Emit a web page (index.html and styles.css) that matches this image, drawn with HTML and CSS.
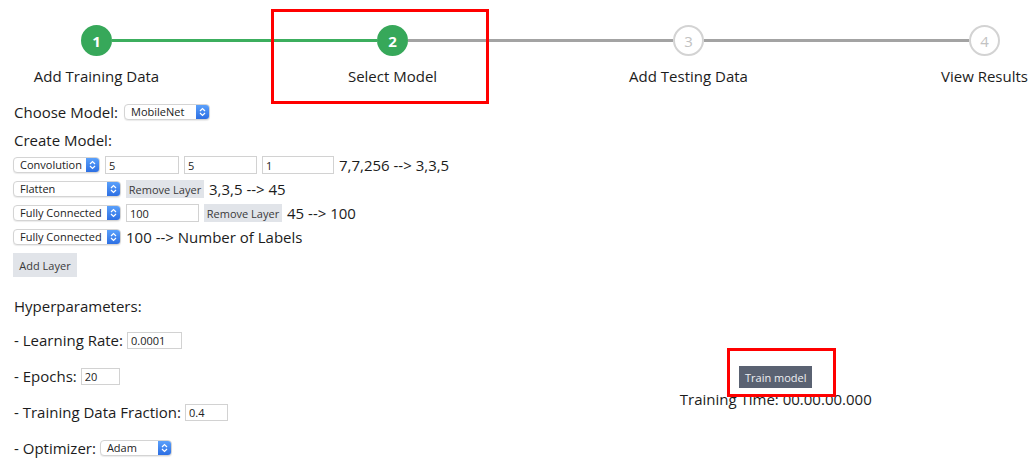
FILE: index.html
```html
<!DOCTYPE html>
<html>
<head>
<meta charset="utf-8">
<link rel="stylesheet" href="styles.css">
</head>
<body>
<div class="stepper">
  <div class="track">
    <span class="dot done">1</span><span class="bar done"></span><span class="dot done">2</span><span class="bar"></span><span class="dot">3</span><span class="bar"></span><span class="dot">4</span>
  </div>
  <div class="labels">
    <div class="lab"><span>Add Training Data</span></div>
    <div class="lab"><span>Select Model</span></div>
    <div class="lab"><span>Add Testing Data</span></div>
    <div class="lab"><span>View Results</span></div>
  </div>
  <div class="highlight hl-step"></div>
</div>

<div class="main">
  <div class="left">
    <div class="row choose">
      <span>Choose Model:</span>
      <span class="select w-mobile"><span class="sel-text">MobileNet</span><span class="arrow"><svg width="7" height="10" viewBox="0 0 7 10"><path d="M1 4 L3.5 1.5 L6 4 M1 6 L3.5 8.5 L6 6" fill="none" stroke="#fff" stroke-width="1.2"/></svg></span></span>
    </div>
    <div class="row create">Create Model:</div>

    <div class="row layer">
      <span class="select w-conv"><span class="sel-text">Convolution</span><span class="arrow"><svg width="7" height="10" viewBox="0 0 7 10"><path d="M1 4 L3.5 1.5 L6 4 M1 6 L3.5 8.5 L6 6" fill="none" stroke="#fff" stroke-width="1.2"/></svg></span></span>
      <input class="inp w-74" value="5">
      <input class="inp w-73" value="5">
      <input class="inp w-72" value="1">
      <span>7,7,256 --&gt; 3,3,5</span>
    </div>
    <div class="row layer">
      <span class="select w-108"><span class="sel-text">Flatten</span><span class="arrow"><svg width="7" height="10" viewBox="0 0 7 10"><path d="M1 4 L3.5 1.5 L6 4 M1 6 L3.5 8.5 L6 6" fill="none" stroke="#fff" stroke-width="1.2"/></svg></span></span>
      <button class="btn-light remove">Remove Layer</button>
      <span>3,3,5 --&gt; 45</span>
    </div>
    <div class="row layer">
      <span class="select w-108"><span class="sel-text">Fully Connected</span><span class="arrow"><svg width="7" height="10" viewBox="0 0 7 10"><path d="M1 4 L3.5 1.5 L6 4 M1 6 L3.5 8.5 L6 6" fill="none" stroke="#fff" stroke-width="1.2"/></svg></span></span>
      <input class="inp w-73" value="100">
      <button class="btn-light remove">Remove Layer</button>
      <span>45 --&gt; 100</span>
    </div>
    <div class="row layer">
      <span class="select w-108"><span class="sel-text">Fully Connected</span><span class="arrow"><svg width="7" height="10" viewBox="0 0 7 10"><path d="M1 4 L3.5 1.5 L6 4 M1 6 L3.5 8.5 L6 6" fill="none" stroke="#fff" stroke-width="1.2"/></svg></span></span>
      <span>100 --&gt; Number of Labels</span>
    </div>
    <button class="btn-light add">Add Layer</button>

    <div class="row hyper-title">Hyperparameters:</div>
    <div class="hyper">
      <div class="row"><span>- Learning Rate:</span><input class="inp small w-55" value="0.0001"></div>
      <div class="row"><span>- Epochs:</span><input class="inp small w-39" value="20"></div>
      <div class="row"><span>- Training Data Fraction:</span><input class="inp small w-43" value="0.4"></div>
      <div class="row"><span>- Optimizer:</span><span class="select w-72"><span class="sel-text">Adam</span><span class="arrow"><svg width="7" height="10" viewBox="0 0 7 10"><path d="M1 4 L3.5 1.5 L6 4 M1 6 L3.5 8.5 L6 6" fill="none" stroke="#fff" stroke-width="1.2"/></svg></span></span></div>
    </div>
  </div>

  <div class="right">
    <div class="train-wrap">
      <button class="btn-dark">Train model</button>
      <div class="highlight hl-train"></div>
    </div>
    <div class="time">Training Time: 00.00.00.000</div>
  </div>
</div>
</body>
</html>
```
FILE: styles.css
```css
* { box-sizing: border-box; }
html, body {
  margin: 0;
  padding: 0;
  background: #fff;
}
body {
  font-family: "Open Sans", "Liberation Sans", sans-serif;
  font-size: 15px;
  line-height: 20px;
  color: #1c1c1c;
  width: 1035px;
  height: 463px;
  overflow: hidden;
  position: relative;
}

/* Stepper */
.stepper { position: relative; }
.track {
  display: flex;
  align-items: center;
  margin-left: 81px;
  width: 919px;
  padding-top: 25px;
}
.dot {
  width: 31px;
  height: 31px;
  flex: none;
  border-radius: 50%;
  border: 2px solid #d3d3d3;
  background: #fff;
  color: #c2c2c2;
  display: flex;
  align-items: center;
  justify-content: center;
  font-size: 15px;
  font-weight: 400;
}
.dot.done {
  background: #37a85a;
  border-color: #37a85a;
  color: #fff;
  font-weight: 700;
}
.bar {
  flex: 1;
  height: 3px;
  background: #a3a3a3;
  margin-top: -1px;
}
.bar.done { background: #3cae5e; }

.labels {
  display: grid;
  grid-template-columns: repeat(4, 101px);
  column-gap: 195px;
  margin-left: 46px;
  margin-top: 10px;
}
.lab {
  display: flex;
  flex-direction: column;
  align-items: center;
  white-space: nowrap;
}

.highlight {
  position: absolute;
  border: 3px solid #ff0000;
  pointer-events: none;
}
.hl-step {
  left: 271px;
  top: 9px;
  width: 218px;
  height: 95px;
}

/* Main */
.main {
  display: flex;
}
.left {
  flex: 1;
  padding-left: 13px;
}
.right {
  flex: 1;
  display: flex;
  flex-direction: column;
  align-items: center;
  padding-top: 280px;
  padding-right: 5px;
}

.row {
  display: flex;
  align-items: center;
  gap: 5px;
  white-space: nowrap;
}
.choose { height: 20px; margin-top: 16px; gap: 6px; padding-left: 1px; }
.create { height: 20px; margin-top: 8px; padding-left: 1px; }
.layer { height: 24px; }
.create + .layer { margin-top: 3px; }

.select {
  display: inline-flex;
  align-items: stretch;
  height: 16px;
  background: #fff;
  border: 1px solid #d4d4d4;
  border-radius: 4px;
  box-shadow: 0 1px 1px rgba(0,0,0,0.08);
  font-size: 11px;
  line-height: 14px;
  color: #222;
  overflow: hidden;
}
.sel-text {
  flex: 1;
  padding-left: 6px;
  display: flex;
  align-items: center;
}
.arrow {
  width: 13px;
  flex: none;
  background: linear-gradient(#5aa0fb, #2d6fe3);
  display: flex;
  align-items: center;
  justify-content: center;
}
.w-mobile { width: 86px; }
.w-conv { width: 87px; }
.w-108 { width: 108px; }
.w-72 { width: 72px; }

.inp {
  height: 18px;
  border: 1px solid #d2d2d2;
  border-radius: 0;
  padding: 0 3px;
  font-family: "Open Sans", "Liberation Sans", sans-serif;
  font-size: 11px;
  color: #222;
  background: #fff;
  outline: none;
  margin: 0;
}
.inp.small { height: 17px; }
.w-74 { width: 74px; }
.w-73 { width: 73px; }
.w-72 { width: 72px; }
.w-55 { width: 55px; }
.w-39 { width: 39px; }
.w-43 { width: 43px; }

.btn-light {
  border: none;
  margin: 0;
  background: #e1e4e9;
  color: #3a3a3a;
  font-family: "Open Sans", "Liberation Sans", sans-serif;
  font-size: 11px;
  padding: 0;
}
.remove { width: 78px; height: 18px; }
.add { width: 64px; height: 24px; margin-top: 4px; display: block; }

.hyper-title { height: 20px; margin-top: 19px; padding-left: 1px; }
.hyper {
  display: flex;
  flex-direction: column;
  gap: 16px;
  margin-top: 14px;
  padding-left: 1px;
}
.hyper .row { height: 20px; gap: 4px; }

.train-wrap { position: relative; }
.btn-dark {
  display: block;
  width: 73px;
  height: 22px;
  border: none;
  margin: 0;
  padding: 0;
  background: #5a6272;
  color: #eef0f3;
  font-family: "Open Sans", "Liberation Sans", sans-serif;
  font-size: 11px;
}
.hl-train {
  left: -12px;
  top: -18px;
  width: 109px;
  height: 49px;
}
.time {
  margin-top: 1px;
  white-space: nowrap;
}
```
